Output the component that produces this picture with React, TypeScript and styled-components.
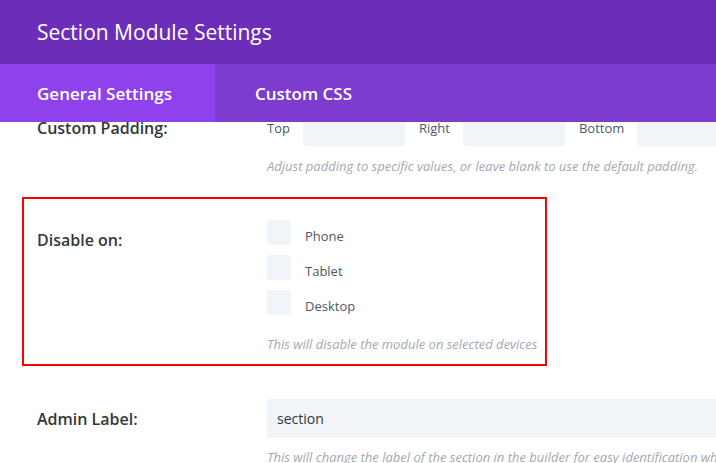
import React from "react"
import styled, { createGlobalStyle } from "styled-components"

const GlobalStyle = createGlobalStyle`
  html, body {
    margin: 0;
    padding: 0;
    background: #fff;
    font-family: "Open Sans", "Liberation Sans", sans-serif;
  }
`

const Modal = styled.div`
  width: 716px;
  height: 463px;
  display: flex;
  flex-direction: column;
  overflow: hidden;
  background: #fff;
`

const Header = styled.div`
  height: 64px;
  flex: none;
  display: flex;
  align-items: center;
  padding-left: 37px;
  background: #6c2eb9;
  color: #fff;
  font-size: 21px;
  font-weight: 400;
`

const Tabs = styled.div`
  height: 58px;
  flex: none;
  display: flex;
  background: #7e3bd0;
  position: relative;
  z-index: 1;
`

const Tab = styled.div<{ $active?: boolean }>`
  display: flex;
  align-items: center;
  width: ${(p) => (p.$active ? "215px" : "auto")};
  box-sizing: border-box;
  padding: 0 40px 0 ${(p) => (p.$active ? "37px" : "40px")};
  background: ${(p) => (p.$active ? "#8f42ec" : "transparent")};
  color: #fff;
  font-size: 17px;
  font-weight: 600;
`

const Scroller = styled.div`
  flex: 1;
  overflow: hidden;
`

const Content = styled.div`
  margin-top: -6px;
  display: flex;
  flex-direction: column;
`

const Option = styled.div<{ $highlight?: boolean }>`
  display: flex;
  margin-left: 22px;
  width: ${(p) => (p.$highlight ? "525px" : "auto")};
  box-sizing: border-box;
  padding: ${(p) => (p.$highlight ? "21px 0 11px 13px" : "0 0 0 15px")};
  border: ${(p) => (p.$highlight ? "2px solid #ff0000" : "none")};
`

const Label = styled.div<{ $top?: number }>`
  width: 230px;
  flex: none;
  padding-top: ${(p) => p.$top ?? 0}px;
  font-size: 16px;
  font-weight: 600;
  line-height: 24px;
  color: #32373c;
`

const Field = styled.div`
  display: flex;
  flex-direction: column;
  min-width: 0;
`

const PaddingRow = styled.div`
  display: flex;
  gap: 14px;
`

const PaddingGroup = styled.div`
  display: flex;
  gap: 13px;
`

const SmallLabel = styled.span`
  font-size: 13px;
  line-height: 24px;
  color: #4c5866;
`

const CheckText = styled.span`
  padding-top: 6px;
  font-size: 13px;
  line-height: 18px;
  color: #4c5866;
`

const Input = styled.div<{ $width?: number; $height?: number }>`
  width: ${(p) => (p.$width ? `${p.$width}px` : "460px")};
  height: ${(p) => p.$height ?? 30}px;
  flex: none;
  box-sizing: border-box;
  padding-left: 10px;
  display: flex;
  align-items: center;
  background: #f1f5f9;
  border-radius: 3px;
  font-size: 14px;
  color: #32373c;
`

const Checks = styled.div`
  display: flex;
  flex-direction: column;
  gap: 10px;
`

const CheckRow = styled.label`
  display: flex;
  align-items: center;
  gap: 14px;
`

const Box = styled.span`
  width: 24px;
  height: 25px;
  border-radius: 3px;
  background: #f1f5f9;
  flex: none;
`

const Description = styled.div<{ $top: number }>`
  margin-top: ${(p) => p.$top}px;
  font-size: 13px;
  font-style: italic;
  line-height: 18px;
  color: #a2a9b3;
  white-space: nowrap;
`

const Spacer = styled.div<{ $h: number }>`
  height: ${(p) => p.$h}px;
  flex: none;
`

export default function App() {
  return (
    <>
      <GlobalStyle />
      <Modal>
        <Header>Section Module Settings</Header>
        <Tabs>
          <Tab $active>General Settings</Tab>
          <Tab>Custom CSS</Tab>
        </Tabs>
        <Scroller>
          <Content>
            <Option>
              <Label>Custom Padding:</Label>
              <Field>
                <PaddingRow>
                  <PaddingGroup>
                    <SmallLabel>Top</SmallLabel>
                    <Input $width={102} />
                  </PaddingGroup>
                  <PaddingGroup>
                    <SmallLabel>Right</SmallLabel>
                    <Input $width={102} />
                  </PaddingGroup>
                  <PaddingGroup>
                    <SmallLabel>Bottom</SmallLabel>
                    <Input $width={102} />
                  </PaddingGroup>
                </PaddingRow>
                <Description $top={11}>
                  Adjust padding to specific values, or leave blank to use the default padding.
                </Description>
              </Field>
            </Option>
            <Spacer $h={22} />
            <Option $highlight>
              <Label $top={8}>Disable on:</Label>
              <Field>
                <Checks>
                  {["Phone", "Tablet", "Desktop"].map((d) => (
                    <CheckRow key={d}>
                      <Box />
                      <CheckText>{d}</CheckText>
                    </CheckRow>
                  ))}
                </Checks>
                <Description $top={20}>This will disable the module on selected devices</Description>
              </Field>
            </Option>
            <Spacer $h={33} />
            <Option>
              <Label $top={8}>Admin Label:</Label>
              <Field>
                <Input $height={39}>section</Input>
                <Description $top={10}>
                  This will change the label of the section in the builder for easy identification when collapsed.
                </Description>
              </Field>
            </Option>
          </Content>
        </Scroller>
      </Modal>
    </>
  )
}
